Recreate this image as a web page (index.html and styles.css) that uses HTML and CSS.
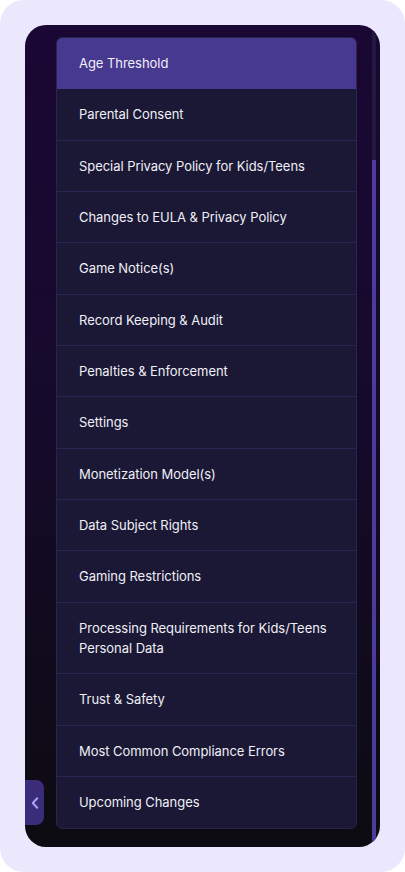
FILE: index.html
```html
<!DOCTYPE html>
<html lang="en">
<head>
<meta charset="utf-8">
<title>Topics</title>
<link rel="stylesheet" href="styles.css">
</head>
<body>
<div class="page">
  <div class="frame">
    <div class="content">
      <ul class="menu">
        <li class="item active">Age Threshold</li>
        <li class="item">Parental Consent</li>
        <li class="item">Special Privacy Policy for Kids/Teens</li>
        <li class="item">Changes to EULA &amp; Privacy Policy</li>
        <li class="item">Game Notice(s)</li>
        <li class="item">Record Keeping &amp; Audit</li>
        <li class="item">Penalties &amp; Enforcement</li>
        <li class="item">Settings</li>
        <li class="item">Monetization Model(s)</li>
        <li class="item">Data Subject Rights</li>
        <li class="item">Gaming Restrictions</li>
        <li class="item">Processing Requirements for Kids/Teens Personal Data</li>
        <li class="item">Trust &amp; Safety</li>
        <li class="item">Most Common Compliance Errors</li>
        <li class="item">Upcoming Changes</li>
      </ul>
    </div>
    <div class="scrollbar"><div class="thumb"></div></div>
    <button class="toggle" aria-label="Collapse">
      <svg width="8" height="12" viewBox="0 0 8 12"><path d="M6.2 1.2 L1.8 6 L6.2 10.8" fill="none" stroke="#ad9ff7" stroke-width="2" stroke-linecap="round" stroke-linejoin="round"/></svg>
    </button>
  </div>
</div>
</body>
</html>
```
FILE: styles.css
```css
html, body {
  margin: 0;
  padding: 0;
  background: #ffffff;
}
body {
  font-family: Inter, "Noto Sans", sans-serif;
}
.page {
  width: 405px;
  height: 872px;
  box-sizing: border-box;
  padding: 25px;
  background: #ebe7fd;
  border-radius: 24px;
}
.frame {
  position: relative;
  height: 822px;
  width: 355px;
  border-radius: 21px;
  overflow: hidden;
  display: flex;
  background: linear-gradient(180deg, #1a0734 0%, #160a2c 45%, #0c0b11 100%);
}
.content {
  flex: 1;
  padding: 12px 15px 0 31px;
}
.menu {
  list-style: none;
  margin: 0;
  padding: 0;
  background: #1a1834;
  border: 1px solid #29234f;
  border-radius: 6px;
  overflow: hidden;
}
.item {
  padding: 15px 22px;
  font-size: 13px;
  letter-spacing: -0.05px;
  line-height: 20.35px;
  color: #f0eff7;
  border-bottom: 1px solid #2a2453;
}
.item:last-child {
  border-bottom: none;
}
.item.active {
  background: #47398f;
  border-bottom-color: #47398f;
}
.scrollbar {
  width: 4px;
  margin-right: 4px;
  background: #211a3c;
  display: flex;
  flex-direction: column;
}
.thumb {
  margin-top: 135px;
  flex: 1;
  background: #4b3c9c;
}
.toggle {
  position: absolute;
  left: 0;
  top: 755px;
  width: 19px;
  height: 45px;
  padding: 0;
  border: none;
  background: #3a2c79;
  border-radius: 0 8px 8px 0;
  display: flex;
  align-items: center;
  justify-content: center;
}
```
